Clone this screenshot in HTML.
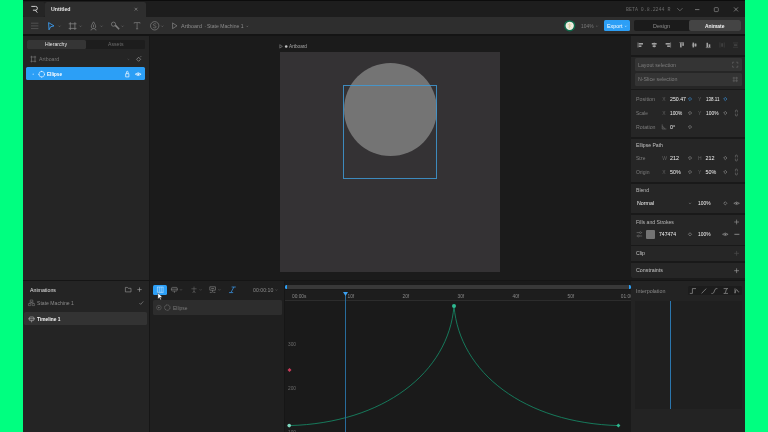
<!DOCTYPE html>
<html><head><meta charset="utf-8"><title>Rive</title>
<style>
html,body{margin:0;padding:0;width:768px;height:432px;overflow:hidden;background:#00ff80;font-family:"Liberation Sans",sans-serif;}
#app{position:absolute;left:0;top:0;width:768px;height:432px;overflow:hidden;will-change:transform}
#app div{position:absolute}
#app span{position:absolute;white-space:nowrap;transform-origin:0 50%}
#app svg{position:absolute;left:0;top:0}
</style></head><body><div id="app">
<div style="left:23px;top:0px;width:722px;height:432px;background:#1b1b1b;"></div>
<div style="left:23px;top:0px;width:722px;height:1.3px;background:#0c0c0c;"></div>
<div style="left:23px;top:1px;width:722px;height:16px;background:#1d1d1d;"></div>
<div style="left:23px;top:1.5px;width:22px;height:15px;background:#252525;border-radius:2px"></div>
<div style="left:45px;top:1.5px;width:101.3px;height:15.5px;background:#2e2e2e;border-radius:2px 2px 0 0"></div>
<div style="left:23px;top:16.6px;width:722px;height:18px;background:#2e2e2e;"></div>
<div style="left:23px;top:34.4px;width:722px;height:1.7px;background:#141414;"></div>
<div style="left:23px;top:35.9px;width:126.3px;height:244.6px;background:#252525;"></div>
<div style="left:149.3px;top:35.9px;width:0.8px;height:244.6px;background:#171717;"></div>
<div style="left:150px;top:35.9px;width:481px;height:244.6px;background:#1b1b1b;"></div>
<div style="left:631px;top:35.9px;width:114px;height:242.1px;background:#262626;border-radius:0 0 0 2px"></div>
<div style="left:23px;top:279.8px;width:722px;height:1.2px;background:#151515;"></div>
<div style="left:23px;top:281px;width:126.3px;height:151px;background:#242424;"></div>
<div style="left:149.3px;top:281px;width:0.8px;height:151px;background:#161616;"></div>
<div style="left:150px;top:281px;width:133.5px;height:151px;background:#1f1f1f;"></div>
<div style="left:283.5px;top:281px;width:1.5px;height:151px;background:#161616;"></div>
<div style="left:285px;top:281px;width:346px;height:151px;background:#1a1a1a;"></div>
<div style="left:631px;top:281px;width:114px;height:151px;background:#232323;"></div>
<div style="left:280px;top:52px;width:220px;height:219.5px;background:#343234;"></div>
<div style="left:344px;top:63px;width:93px;height:93px;border-radius:50%;background:#747474"></div>
<div style="left:343px;top:85px;width:93.5px;height:93.5px;border:1px solid rgba(63,154,214,0.85);box-sizing:border-box"></div>
<span style="left:289.00px;top:43.84px;font-size:4.6px;line-height:5.52px;color:#a8a8a8;font-weight:400;transform:scaleX(1.020);">Artboard</span>
<span style="left:51.00px;top:5.94px;font-size:5.6px;line-height:6.72px;color:#e6e6e6;font-weight:700;transform:scaleX(0.936);">Untitled</span>
<span style="left:626.00px;top:7.08px;font-size:5.2px;line-height:6.24px;color:#6a6a6a;font-weight:400;font-family:'Liberation Mono',monospace;transform:scaleX(0.951);">BETA 0.8.2244 R</span>
<span style="left:181.00px;top:22.64px;font-size:5.6px;line-height:6.72px;color:#8c8c8c;font-weight:400;transform:scaleX(0.978);">Artboard</span>
<span style="left:204.30px;top:22.64px;font-size:5.6px;line-height:6.72px;color:#8c8c8c;font-weight:400;">·</span>
<span style="left:207.00px;top:22.64px;font-size:5.6px;line-height:6.72px;color:#8c8c8c;font-weight:400;transform:scaleX(0.902);">State Machine 1</span>
<span style="left:581.00px;top:22.82px;font-size:5.3px;line-height:6.36px;color:#7a7a7a;font-weight:400;transform:scaleX(0.922);">104%</span>
<div style="left:604px;top:20.2px;width:26px;height:11.3px;background:#2c9ff6;border-radius:1.5px"></div>
<span style="left:607.00px;top:23.04px;font-size:5.6px;line-height:6.72px;color:#ffffff;font-weight:400;transform:scaleX(0.958);">Export</span>
<div style="left:634.3px;top:20.3px;width:107px;height:11.1px;background:#1b1b1b;border-radius:2px"></div>
<div style="left:689px;top:20.3px;width:52.3px;height:11.1px;background:#444444;border-radius:2px"></div>
<span style="left:652.50px;top:23.04px;font-size:5.6px;line-height:6.72px;color:#8c8c8c;font-weight:400;transform:scaleX(0.975);">Design</span>
<span style="left:705.25px;top:23.04px;font-size:5.6px;line-height:6.72px;color:#f0f0f0;font-weight:700;transform:scaleX(0.883);">Animate</span>
<div style="left:26.8px;top:40.2px;width:118.7px;height:8.9px;background:#1d1d1d;border-radius:1.5px"></div>
<div style="left:26.8px;top:40.2px;width:59.2px;height:8.9px;background:#353535;border-radius:1.5px"></div>
<span style="left:45.10px;top:41.46px;font-size:5.4px;line-height:6.48px;color:#e8e8e8;font-weight:400;transform:scaleX(0.952);">Hierarchy</span>
<span style="left:107.75px;top:41.36px;font-size:5.4px;line-height:6.48px;color:#6c6c6c;font-weight:400;transform:scaleX(0.956);">Assets</span>
<span style="left:38.80px;top:56.06px;font-size:5.4px;line-height:6.48px;color:#767676;font-weight:400;transform:scaleX(0.975);">Artboard</span>
<div style="left:26px;top:67.4px;width:119.4px;height:12.9px;background:#2c9ff6;border-radius:1.5px"></div>
<span style="left:46.80px;top:71.06px;font-size:5.4px;line-height:6.48px;color:#ffffff;font-weight:700;transform:scaleX(0.862);">Ellipse</span>
<div style="left:631px;top:55px;width:114px;height:1.5px;background:#191919;"></div>
<div style="left:631px;top:88.5px;width:114px;height:1.5px;background:#191919;"></div>
<div style="left:631px;top:137px;width:114px;height:1.5px;background:#191919;"></div>
<div style="left:631px;top:182px;width:114px;height:1.5px;background:#191919;"></div>
<div style="left:631px;top:213px;width:114px;height:1.5px;background:#191919;"></div>
<div style="left:631px;top:244.5px;width:114px;height:1.5px;background:#191919;"></div>
<div style="left:631px;top:261px;width:114px;height:1.5px;background:#191919;"></div>
<div style="left:635px;top:58px;width:106.5px;height:13px;background:#343434;border-radius:1.5px"></div>
<div style="left:635px;top:72.8px;width:106.5px;height:13px;background:#343434;border-radius:1.5px"></div>
<span style="left:638.00px;top:61.82px;font-size:5.3px;line-height:6.36px;color:#7e7e7e;font-weight:400;transform:scaleX(0.992);">Layout selection</span>
<span style="left:638.00px;top:76.32px;font-size:5.3px;line-height:6.36px;color:#7e7e7e;font-weight:400;">N-Slice selection</span>
<span style="left:636.00px;top:95.82px;font-size:5.3px;line-height:6.36px;color:#7e7e7e;font-weight:400;transform:scaleX(1.008);">Position</span>
<span style="left:662.30px;top:96.00px;font-size:5.0px;line-height:6.00px;color:#606060;font-weight:400;">X</span>
<span style="left:670.00px;top:95.76px;font-size:5.4px;line-height:6.48px;color:#f2f2f2;font-weight:400;transform:scaleX(0.969);">250.47</span>
<span style="left:698.00px;top:96.00px;font-size:5.0px;line-height:6.00px;color:#606060;font-weight:400;">Y</span>
<span style="left:705.50px;top:95.76px;font-size:5.4px;line-height:6.48px;color:#f2f2f2;font-weight:400;transform:scaleX(0.838);">138.11</span>
<span style="left:636.00px;top:109.82px;font-size:5.3px;line-height:6.36px;color:#7e7e7e;font-weight:400;transform:scaleX(0.905);">Scale</span>
<span style="left:662.30px;top:110.00px;font-size:5.0px;line-height:6.00px;color:#606060;font-weight:400;">X</span>
<span style="left:670.00px;top:109.76px;font-size:5.4px;line-height:6.48px;color:#f2f2f2;font-weight:400;transform:scaleX(0.891);">100%</span>
<span style="left:698.00px;top:110.00px;font-size:5.0px;line-height:6.00px;color:#606060;font-weight:400;">Y</span>
<span style="left:705.50px;top:109.76px;font-size:5.4px;line-height:6.48px;color:#f2f2f2;font-weight:400;transform:scaleX(0.905);">100%</span>
<span style="left:636.00px;top:123.82px;font-size:5.3px;line-height:6.36px;color:#7e7e7e;font-weight:400;transform:scaleX(0.988);">Rotation</span>
<span style="left:662.30px;top:124.00px;font-size:5.0px;line-height:6.00px;color:#606060;font-weight:400;"></span>
<span style="left:670.00px;top:123.76px;font-size:5.4px;line-height:6.48px;color:#f2f2f2;font-weight:400;">0°</span>
<span style="left:636.00px;top:142.26px;font-size:5.4px;line-height:6.48px;color:#c0c0c0;font-weight:400;transform:scaleX(0.947);">Ellipse Path</span>
<span style="left:636.00px;top:154.82px;font-size:5.3px;line-height:6.36px;color:#7e7e7e;font-weight:400;transform:scaleX(0.921);">Size</span>
<span style="left:662.30px;top:155.00px;font-size:5.0px;line-height:6.00px;color:#606060;font-weight:400;">W</span>
<span style="left:670.00px;top:154.76px;font-size:5.4px;line-height:6.48px;color:#f2f2f2;font-weight:400;">212</span>
<span style="left:698.00px;top:155.00px;font-size:5.0px;line-height:6.00px;color:#606060;font-weight:400;">H</span>
<span style="left:705.50px;top:154.76px;font-size:5.4px;line-height:6.48px;color:#f2f2f2;font-weight:400;">212</span>
<span style="left:636.00px;top:168.82px;font-size:5.3px;line-height:6.36px;color:#7e7e7e;font-weight:400;transform:scaleX(0.955);">Origin</span>
<span style="left:662.30px;top:169.00px;font-size:5.0px;line-height:6.00px;color:#606060;font-weight:400;">X</span>
<span style="left:670.00px;top:168.76px;font-size:5.4px;line-height:6.48px;color:#f2f2f2;font-weight:400;">50%</span>
<span style="left:698.00px;top:169.00px;font-size:5.0px;line-height:6.00px;color:#606060;font-weight:400;">Y</span>
<span style="left:705.50px;top:168.76px;font-size:5.4px;line-height:6.48px;color:#f2f2f2;font-weight:400;">50%</span>
<span style="left:636.00px;top:187.26px;font-size:5.4px;line-height:6.48px;color:#b8b8b8;font-weight:400;transform:scaleX(0.941);">Blend</span>
<span style="left:637.00px;top:200.00px;font-size:5.5px;line-height:6.60px;color:#f0f0f0;font-weight:400;transform:scaleX(0.959);">Normal</span>
<span style="left:698.00px;top:200.06px;font-size:5.4px;line-height:6.48px;color:#f2f2f2;font-weight:400;transform:scaleX(0.905);">100%</span>
<span style="left:636.00px;top:218.76px;font-size:5.4px;line-height:6.48px;color:#b8b8b8;font-weight:400;transform:scaleX(0.952);">Fills and Strokes</span>
<div style="left:646px;top:230px;width:9.3px;height:9.3px;background:#747474;border-radius:1px"></div>
<span style="left:659.00px;top:231.06px;font-size:5.4px;line-height:6.48px;color:#f2f2f2;font-weight:400;transform:scaleX(0.944);">747474</span>
<span style="left:698.00px;top:231.06px;font-size:5.4px;line-height:6.48px;color:#f2f2f2;font-weight:400;transform:scaleX(0.905);">100%</span>
<span style="left:636.00px;top:250.06px;font-size:5.4px;line-height:6.48px;color:#c4c4c4;font-weight:400;transform:scaleX(0.967);">Clip</span>
<span style="left:636.00px;top:267.26px;font-size:5.4px;line-height:6.48px;color:#c4c4c4;font-weight:400;transform:scaleX(0.989);">Constraints</span>
<span style="left:29.50px;top:286.76px;font-size:5.4px;line-height:6.48px;color:#e0e0e0;font-weight:400;transform:scaleX(0.973);">Animations</span>
<span style="left:37.00px;top:299.76px;font-size:5.4px;line-height:6.48px;color:#8a8a8a;font-weight:400;transform:scaleX(0.948);">State Machine 1</span>
<div style="left:24.2px;top:312px;width:122.6px;height:13.4px;background:#333333;border-radius:1.5px"></div>
<span style="left:37.00px;top:315.76px;font-size:5.4px;line-height:6.48px;color:#f4f4f4;font-weight:700;transform:scaleX(0.893);">Timeline 1</span>
<div style="left:152.8px;top:284.6px;width:14.3px;height:10.1px;background:#2c9ff6;border-radius:1.5px"></div>
<span style="left:252.70px;top:287.02px;font-size:5.3px;line-height:6.36px;color:#8a8a8a;font-weight:400;transform:scaleX(0.984);">00:00:10</span>
<div style="left:152.8px;top:300.3px;width:129.4px;height:14.4px;background:#2d2d2d;border-radius:1.5px"></div>
<span style="left:173.00px;top:304.60px;font-size:5.5px;line-height:6.60px;color:#7a7a7a;font-weight:400;transform:scaleX(0.895);">Ellipse</span>
<div style="left:285px;top:284.7px;width:346px;height:4.1px;background:#383838;border-radius:2px"></div>
<div style="left:285px;top:284.6px;width:2.2px;height:4.3px;background:#2c9ff6;border-radius:1.5px 0 0 1.5px"></div>
<div style="left:628.8px;top:284.6px;width:2.4px;height:4.3px;background:#2c9ff6;border-radius:0 1.5px 1.5px 0"></div>
<div style="left:285px;top:290px;width:346px;height:10px;background:#1d1d1d;"></div>
<div style="left:285px;top:300px;width:346px;height:1px;background:#2c2c2c;"></div>
<span style="left:292.00px;top:293.72px;font-size:4.8px;line-height:5.76px;color:#8a8a8a;font-weight:400;">00:00s</span>
<span style="left:347.50px;top:293.72px;font-size:4.8px;line-height:5.76px;color:#8a8a8a;font-weight:400;">10f</span>
<span style="left:402.50px;top:293.72px;font-size:4.8px;line-height:5.76px;color:#8a8a8a;font-weight:400;">20f</span>
<span style="left:457.50px;top:293.72px;font-size:4.8px;line-height:5.76px;color:#8a8a8a;font-weight:400;">30f</span>
<span style="left:512.50px;top:293.72px;font-size:4.8px;line-height:5.76px;color:#8a8a8a;font-weight:400;">40f</span>
<span style="left:567.50px;top:293.72px;font-size:4.8px;line-height:5.76px;color:#8a8a8a;font-weight:400;">50f</span>
<span style="left:620.80px;top:293.72px;font-size:4.8px;line-height:5.76px;color:#8a8a8a;font-weight:400;">01:00</span>
<div style="left:631.3px;top:281px;width:113.7px;height:20px;background:#232323;"></div>
<span style="left:288.00px;top:429.72px;font-size:4.8px;line-height:5.76px;color:#6c6c6c;font-weight:400;">100</span>
<span style="left:288.00px;top:341.92px;font-size:4.8px;line-height:5.76px;color:#6c6c6c;font-weight:400;">300</span>
<span style="left:288.00px;top:385.92px;font-size:4.8px;line-height:5.76px;color:#6c6c6c;font-weight:400;">200</span>
<span style="left:636.00px;top:287.82px;font-size:5.3px;line-height:6.36px;color:#8a8a8a;font-weight:400;transform:scaleX(1.011);">Interpolation</span>
<div style="left:687.8px;top:285.7px;width:54.5px;height:9.8px;background:#1c1c1c;border-radius:1.5px"></div>
<div style="left:635px;top:301px;width:107px;height:107.5px;background:#1f1f1f;"></div>
<div style="left:670px;top:301px;width:1px;height:107.5px;background:#2b76ad;"></div>
<svg width="768" height="432" viewBox="0 0 768 432">
<path d="M31.3,6.4 h4.2 a1.9,1.9 0 0 1 0,3.8 h-2.6 M35.3,10.2 l2,2.4" fill="none" stroke="#e0e0e0" stroke-width="0.9"/>
<path d="M134.6,7.799999999999999 l2.8,2.8 M137.4,7.799999999999999 l-2.8,2.8" fill="none" stroke="#8e8e8e" stroke-width="0.65"/>
<path d="M677.3,8.2 l2.6,2.6 l2.6,-2.6" fill="none" stroke="#7a7a7a" stroke-width="0.7"/>
<path d="M695,9.6 h4.4" fill="none" stroke="#9a9a9a" stroke-width="0.7"/>
<rect x="714.3" y="7.6" width="4" height="4" rx="0.8" fill="none" stroke="#8a8a8a" stroke-width="0.7"/>
<path d="M734,7.4 l4,4 M738,7.4 l-4,4" fill="none" stroke="#9a9a9a" stroke-width="0.7"/>
<path d="M31,23.2 h7.4 M31,25.9 h7.4 M31,28.6 h7.4" stroke="#606060" stroke-width="0.7" fill="none"/>
<path d="M48.6,22.6 l5.4,3.3 l-3.4,0.9 l-1.6,3z" fill="none" stroke="#3b9cf0" stroke-width="0.9" stroke-linejoin="round"/>
<path d="M58.5,25.7 l1.0,1.0 l1.0,-1.0" fill="none" stroke="#6a6a6a" stroke-width="0.7"/>
<path d="M70.3,22.2 v7.8 M74.9,22.2 v7.8 M68.7,23.8 h7.8 M68.7,28.4 h7.8" stroke="#868686" stroke-width="0.75" fill="none"/>
<path d="M79.5,25.7 l1.0,1.0 l1.0,-1.0" fill="none" stroke="#6a6a6a" stroke-width="0.7"/>
<path d="M93.5,21.8 c-1,1.6 -2.2,3.4 -2.2,5.2 l1.1,1.6 h2.2 l1.1,-1.6 c0,-1.8 -1.2,-3.6 -2.2,-5.2z M93.5,24.6 v2.6 M90.6,30 q1.6,0 1.8,-1.4 M96.4,30 q-1.6,0 -1.8,-1.4" fill="none" stroke="#828282" stroke-width="0.7" stroke-linejoin="round"/>
<path d="M100.5,25.7 l1.0,1.0 l1.0,-1.0" fill="none" stroke="#6a6a6a" stroke-width="0.7"/>
<circle cx="113.5" cy="24.2" r="2.1" fill="none" stroke="#828282" stroke-width="0.75"/><path d="M114.8,25.8 l3.9,3.7 l0.7,-0.8 l-3.6,-3.9z" fill="#828282" stroke="#828282" stroke-width="0.4"/>
<path d="M121.5,25.7 l1.0,1.0 l1.0,-1.0" fill="none" stroke="#6a6a6a" stroke-width="0.7"/>
<path d="M134.2,22.6 h5.8 M137.1,22.6 v6.2 M136,28.8 h2.2 M134.2,22.6 v1 M140,22.6 v1" stroke="#7e7e7e" stroke-width="0.7" fill="none"/>
<circle cx="154.7" cy="25.8" r="4.2" fill="none" stroke="#828282" stroke-width="0.7"/>
<path d="M156.2,24.4 c-0.6,-1.1 -3,-0.9 -2.9,0.4 c0.1,1.3 2.9,0.7 2.9,2.1 c0,1.3 -2.4,1.4 -3,0.3" fill="none" stroke="#828282" stroke-width="0.6"/>
<path d="M161.3,25.7 l1.0,1.0 l1.0,-1.0" fill="none" stroke="#6a6a6a" stroke-width="0.7"/>
<path d="M172.6,22.8 v6 M172.6,23 l4.4,2.8 l-4.4,2.8" fill="none" stroke="#868686" stroke-width="0.7" stroke-linejoin="round"/>
<path d="M246.4,25.85 l0.9,0.9 l0.9,-0.9" fill="none" stroke="#7a7a7a" stroke-width="0.6"/>
<path d="M279.8,44.6 v3.6 M279.8,44.8 l2.6,1.6 l-2.6,1.6" fill="none" stroke="#9a9a9a" stroke-width="0.5"/><circle cx="286.2" cy="46.5" r="1.3" fill="#c4c4c4"/>
<circle cx="569.7" cy="25.8" r="4.9" fill="#efede2" stroke="#0e6a4a" stroke-width="1.5"/>
<path d="M567.8,24 l3.4,3.4 M571.4,24 l-3.2,3.6 M569.6,23 v5.6" stroke="#d8cf9a" stroke-width="0.8" fill="none"/>
<path d="M596.1,25.75 l0.9,0.9 l0.9,-0.9" fill="none" stroke="#6a6a6a" stroke-width="0.6"/>
<path d="M624.9,25.75 l0.9,0.9 l0.9,-0.9" fill="none" stroke="#d8ecff" stroke-width="0.6"/>
<path d="M31.5,55.8 v6.6 M35,55.8 v6.6 M30.4,57 h5.8 M30.4,61.3 h5.8" stroke="#7c7c7c" stroke-width="0.6" fill="none"/>
<path d="M127.7,58.9 l0.8,0.8 l0.8,-0.8" fill="none" stroke="#5a5a5a" stroke-width="0.6"/>
<path d="M138.6,57.3 l2.0,2.0 l-2.0,2.0 l-2.0,-2.0z" fill="none" stroke="#9a9a9a" stroke-width="0.7"/>
<path d="M140.2,57.2 l1,-1" stroke="#9a9a9a" stroke-width="0.6"/>
<circle cx="33.2" cy="74.2" r="0.6" fill="#bfe0ff"/>
<circle cx="41.7" cy="74.2" r="2.8" fill="none" stroke="#dcefff" stroke-width="0.65"/><path d="M41.7,71.4 v0.01 M41.7,77 v0.01 M38.9,74.2 h0.01 M44.5,74.2 h0.01" stroke="#eef7ff" stroke-width="1.1" stroke-linecap="round"/>
<path d="M125.7,73.7 h3.2 v3.2 h-3.2z M126.5,73.7 v-1.6 a0.8,0.8 0 0 1 1.6,0 v1.6" fill="none" stroke="#e8f4ff" stroke-width="0.75"/>
<path d="M135.3,74.2 q2.9,-2.9 5.8,0 q-2.9,2.9 -5.8,0z" fill="none" stroke="#e8f4ff" stroke-width="0.8"/><circle cx="138.2" cy="74.2" r="0.9" fill="#e8f4ff"/>
<g transform="translate(640.4,45) scale(0.86) translate(-640.4,-45)"><path d="M637.6,42 v6" stroke="#a4a4a4" stroke-width="0.7"/><rect x="638.4" y="42.7" width="5" height="1.8" fill="#a4a4a4"/><rect x="638.4" y="45.5" width="3.2" height="1.8" fill="#a4a4a4"/></g>
<g transform="translate(654.2,45) scale(0.86) translate(-654.2,-45)"><path d="M654.2,42 v6" stroke="#a4a4a4" stroke-width="0.7"/><rect x="651.4" y="42.7" width="5.6" height="1.8" fill="#a4a4a4"/><rect x="652.4" y="45.5" width="3.6" height="1.8" fill="#a4a4a4"/></g>
<g transform="translate(668.2,45) scale(0.86) translate(-668.2,-45)"><path d="M671,42 v6" stroke="#a4a4a4" stroke-width="0.7"/><rect x="665.2" y="42.7" width="5" height="1.8" fill="#a4a4a4"/><rect x="667" y="45.5" width="3.2" height="1.8" fill="#a4a4a4"/></g>
<g transform="translate(681.8,45) scale(0.86) translate(-681.8,-45)"><path d="M679,42.2 h5.4" stroke="#a4a4a4" stroke-width="0.7"/><rect x="679.8" y="42.8" width="1.8" height="5" fill="#a4a4a4"/><rect x="682.4" y="42.8" width="1.8" height="3.2" fill="#a4a4a4"/></g>
<g transform="translate(694.6,45) scale(0.86) translate(-694.6,-45)"><path d="M691.4,45 h5.6" stroke="#a4a4a4" stroke-width="0.7"/><rect x="692.2" y="42.2" width="1.8" height="5.6" fill="#a4a4a4"/><rect x="694.8" y="43.2" width="1.8" height="3.6" fill="#a4a4a4"/></g>
<g transform="translate(708.3,45) scale(0.86) translate(-708.3,-45)"><path d="M705.4,48 h5.6" stroke="#a4a4a4" stroke-width="0.7"/><rect x="706.2" y="42.4" width="1.8" height="5" fill="#a4a4a4"/><rect x="708.8" y="44.2" width="1.8" height="3.2" fill="#a4a4a4"/></g>
<g transform="translate(722,45) scale(0.86) translate(-722,-45)"><path d="M719.6,42 v6 M724.6,42 v6" stroke="#444444" stroke-width="0.7"/><rect x="721.2" y="43" width="1.8" height="4" fill="#444444"/></g>
<g transform="translate(735.5,45) scale(0.86) translate(-735.5,-45)"><path d="M732.6,42.6 h6 M732.6,47.6 h6" stroke="#444444" stroke-width="0.7"/><rect x="733.6" y="44.2" width="4" height="1.8" fill="#444444"/></g>
<path d="M732.6,63.8 v-1.6 h1.6 M736.2,62.2 h1.6 v1.6 M737.8,65.6 v1.6 h-1.6 M734.2,67.2 h-1.6 v-1.6" fill="none" stroke="#6a6a6a" stroke-width="0.6"/>
<path d="M732.6,78 h5.4 M732.6,80.8 h5.4 M733.9,76.8 v5.4 M736.7,76.8 v5.4" fill="none" stroke="#6a6a6a" stroke-width="0.55"/>
<path d="M690,97.4 l1.6,1.6 l-1.6,1.6 l-1.6,-1.6z" fill="none" stroke="#3b9cf0" stroke-width="0.6"/>
<path d="M725.3,97.4 l1.6,1.6 l-1.6,1.6 l-1.6,-1.6z" fill="none" stroke="#3b9cf0" stroke-width="0.6"/>
<path d="M690,111.4 l1.6,1.6 l-1.6,1.6 l-1.6,-1.6z" fill="none" stroke="#9a9a9a" stroke-width="0.6"/>
<path d="M725.3,111.4 l1.6,1.6 l-1.6,1.6 l-1.6,-1.6z" fill="none" stroke="#9a9a9a" stroke-width="0.6"/>
<path d="M690,156.4 l1.6,1.6 l-1.6,1.6 l-1.6,-1.6z" fill="none" stroke="#9a9a9a" stroke-width="0.6"/>
<path d="M725.3,156.4 l1.6,1.6 l-1.6,1.6 l-1.6,-1.6z" fill="none" stroke="#9a9a9a" stroke-width="0.6"/>
<path d="M690,170.4 l1.6,1.6 l-1.6,1.6 l-1.6,-1.6z" fill="none" stroke="#9a9a9a" stroke-width="0.6"/>
<path d="M725.3,170.4 l1.6,1.6 l-1.6,1.6 l-1.6,-1.6z" fill="none" stroke="#9a9a9a" stroke-width="0.6"/>
<path d="M690,125.4 l1.6,1.6 l-1.6,1.6 l-1.6,-1.6z" fill="none" stroke="#9a9a9a" stroke-width="0.6"/>
<path d="M690,232.70000000000002 l1.6,1.6 l-1.6,1.6 l-1.6,-1.6z" fill="none" stroke="#9a9a9a" stroke-width="0.6"/>
<path d="M725.3,201.70000000000002 l1.6,1.6 l-1.6,1.6 l-1.6,-1.6z" fill="none" stroke="#9a9a9a" stroke-width="0.6"/>
<path d="M735.4,112.4 v-1.4 a1,1 0 0 1 2,0 v1.4 M735.4,113.6 v1.4 a1,1 0 0 0 2,0 v-1.4" fill="none" stroke="#7a7a7a" stroke-width="0.55"/>
<path d="M735.4,157.4 v-1.4 a1,1 0 0 1 2,0 v1.4 M735.4,158.6 v1.4 a1,1 0 0 0 2,0 v-1.4" fill="none" stroke="#7a7a7a" stroke-width="0.55"/>
<path d="M735.4,171.4 v-1.4 a1,1 0 0 1 2,0 v1.4 M735.4,172.6 v1.4 a1,1 0 0 0 2,0 v-1.4" fill="none" stroke="#7a7a7a" stroke-width="0.55"/>
<path d="M662.2,124.4 v4.6 h4.2 M662.2,126.6 a2.4,2.4 0 0 1 2.2,2.4" fill="none" stroke="#7a7a7a" stroke-width="0.55"/>
<path d="M733.8000000000001,203.3 q2.8,-2.6 5.6,0 q-2.8,2.6 -5.6,0z" fill="none" stroke="#9a9a9a" stroke-width="0.6"/><circle cx="736.6" cy="203.3" r="0.8" fill="#9a9a9a"/>
<path d="M722.5,234.3 q2.8,-2.6 5.6,0 q-2.8,2.6 -5.6,0z" fill="none" stroke="#9a9a9a" stroke-width="0.6"/><circle cx="725.3" cy="234.3" r="0.8" fill="#9a9a9a"/>
<path d="M734.4,234.3 h5" stroke="#b0b0b0" stroke-width="0.7"/>
<path d="M689.99,203.29500000000002 l0.01,0.01 l0.01,-0.01" fill="none" stroke="#7a7a7a" stroke-width="0.7"/>
<path d="M688.9,202.8 l1.1,1.1 l1.1,-1.1" fill="none" stroke="#7a7a7a" stroke-width="0.6" transform="translate(0,0)"/>
<path d="M734.2,222 h4.8 M736.6,219.6 v4.8" fill="none" stroke="#a0a0a0" stroke-width="0.6"/>
<path d="M734.2,253.3 h4.8 M736.6,250.9 v4.8" fill="none" stroke="#4e4e4e" stroke-width="0.7"/>
<path d="M734.2,270.7 h4.8 M736.6,268.3 v4.8" fill="none" stroke="#a8a8a8" stroke-width="0.6"/>
<path d="M636.6,232.6 h5.6 M636.6,236 h5.6" stroke="#7a7a7a" stroke-width="0.6"/><circle cx="640.4" cy="232.6" r="0.9" fill="#262626" stroke="#7a7a7a" stroke-width="0.5"/><circle cx="638.4" cy="236" r="0.9" fill="#262626" stroke="#7a7a7a" stroke-width="0.5"/>
<path d="M125.4,287.4 h2 l0.8,0.9 h2.8 v3.6 h-5.6z" fill="none" stroke="#9a9a9a" stroke-width="0.6" stroke-linejoin="round"/>
<path d="M137.3,289.6 h4.4 M139.5,287.40000000000003 v4.4" fill="none" stroke="#a0a0a0" stroke-width="0.65"/>
<path d="M30.2,300 h2.6 v2 h-2.6z M28.4,303.6 h2.4 v2 h-2.4z M32.2,303.6 h2.4 v2 h-2.4z M31.5,302 v0.8 M29.6,303.6 v-0.8 h3.8 v0.8" fill="none" stroke="#7e7e7e" stroke-width="0.55"/>
<path d="M139.4,303 l1.3,1.4 l2.6,-3" fill="none" stroke="#8e8e8e" stroke-width="0.6"/>
<path d="M30.2,317 h2.8 a0.9,0.9 0 0 1 0.9,0.9 v1.8 a0.9,0.9 0 0 1 -0.9,0.9 h-2.8 a0.9,0.9 0 0 1 -0.9,-0.9 v-1.8 a0.9,0.9 0 0 1 0.9,-0.9z M28.2,318.8 h6.8 M31.6,320.6 v1.7" fill="none" stroke="#bcbcbc" stroke-width="0.6"/>
<path d="M157.4,287 v5.4 M159.3,287 v5.4 M161.2,287 v5.4 M163.1,287 v5.4 M157.1,287 h6.3 M157.1,292.4 h6.3" stroke="#c4e2ff" stroke-width="0.6" fill="none"/>
<path d="M157.9,292.8 v6.2 l1.5,-1.4 l1,2.2 l0.9,-0.4 l-1,-2.1 h2z" fill="#ffffff" stroke="#222" stroke-width="0.4"/>
<path d="M172.4,287.4 h4 a0.8,0.8 0 0 1 0.8,0.8 v2 a0.8,0.8 0 0 1 -0.8,0.8 h-4 a0.8,0.8 0 0 1 -0.8,-0.8 v-2 a0.8,0.8 0 0 1 0.8,-0.8z M170.8,289.2 h7.2 M174.4,291 v1.9" fill="none" stroke="#858585" stroke-width="0.6"/>
<path d="M180.1,289.35 l0.9,0.9 l0.9,-0.9" fill="none" stroke="#6a6a6a" stroke-width="0.6"/>
<path d="M194,286.6 v6 M191.4,288.8 h5.2 M192.6,292.8 l1.4,-1.6 l1.4,1.6" fill="none" stroke="#6a6a6a" stroke-width="0.6"/>
<path d="M199.7,289.35 l0.9,0.9 l0.9,-0.9" fill="none" stroke="#5e5e5e" stroke-width="0.6"/>
<path d="M209.8,286.8 h5.6 v3.4 h-5.6z M211.2,288.5 h2.8 M209.8,292.4 h2 M213.4,292.4 h2 M212.6,290.2 v2.2" fill="none" stroke="#8e8e8e" stroke-width="0.6"/>
<path d="M218.5,289.35 l0.9,0.9 l0.9,-0.9" fill="none" stroke="#6a6a6a" stroke-width="0.6"/>
<path d="M231.6,287 h4.2 M229,292.6 h4.2 M233.9,287 L230.9,292.6" fill="none" stroke="#3b9cf0" stroke-width="0.7"/>
<path d="M275.59999999999997,289.6 l0.8,0.8 l0.8,-0.8" fill="none" stroke="#6a6a6a" stroke-width="0.6"/>
<circle cx="158.9" cy="307.6" r="2.3" fill="none" stroke="#6a6a6a" stroke-width="0.5"/><path d="M158.4,306.7 l1.4,0.9 l-1.4,0.9z" fill="#8a8a8a"/>
<circle cx="167.3" cy="307.6" r="2.7" fill="none" stroke="#8a8a8a" stroke-width="0.6" stroke-dasharray="1.3 0.5"/>
<path d="M689.8,293.4 h2.6 v-4.8 h3.6" fill="none" stroke="#a2a2a2" stroke-width="0.65"/>
<path d="M701.6,293.4 l4.6,-4.8" fill="none" stroke="#a2a2a2" stroke-width="0.65"/>
<path d="M711.4,293.4 h1.2 c2.2,0 1.4,-4.8 3.6,-4.8 h1.2" fill="none" stroke="#a2a2a2" stroke-width="0.65"/>
<path d="M723.6,288.6 h4.4 M723.6,293.4 h4.4 M724.6,293.2 c1.8,0 0.8,-4.4 2.6,-4.4" fill="none" stroke="#a2a2a2" stroke-width="0.65"/>
<path d="M735,288.4 v5 M735,293 c0.6,-2 1,-3.4 1.8,-3.4 c0.8,0 0.6,2.2 1.6,2.2 h0.8" fill="none" stroke="#a2a2a2" stroke-width="0.65"/>
<path d="M289.2,425.6 C383.5,423.1 448.5,372.8 454,306 C459.5,372.8 524.5,423.1 618.8,425.6" fill="none" stroke="#15906b" stroke-width="0.8"/>
<circle cx="454" cy="306" r="2" fill="#2fb890"/>
<circle cx="289.2" cy="425.6" r="1.8" fill="#7fd8c0"/>
<path d="M618.4,423.6 l2,2 -2,2 -2,-2z" fill="#2fb890"/>
<path d="M289.5,368 l2,2 -2,2 -2,-2z" fill="#c83c5a"/>
<rect x="345" y="294" width="1" height="138" fill="#286c9c"/>
<path d="M343,292 h5 l-2.5,4z" fill="#3ba0f0"/>
</svg>
</div></body></html>
